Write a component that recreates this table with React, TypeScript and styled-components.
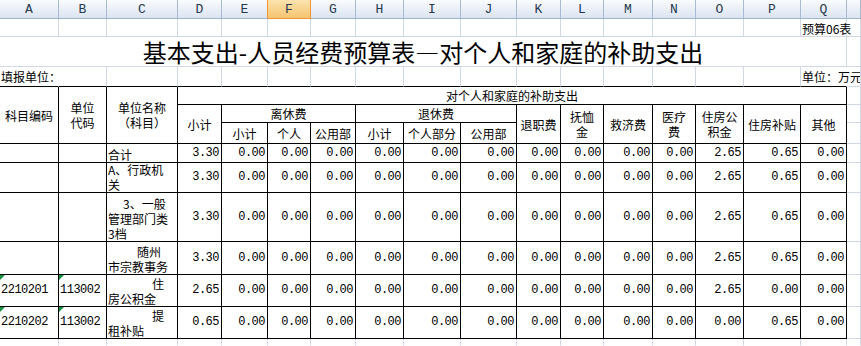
import React from 'react';
import styled, { createGlobalStyle, css } from 'styled-components';

const GRID = '#d0d7e5';
const INK = '#000';

const GlobalStyle = createGlobalStyle`
  html, body { margin: 0; padding: 0; background: #fff; }
  body { width: 861px; height: 346px; overflow: hidden; }
`;

// column widths A..Q, border included (R is whatever is left)
const cols = [59, 48, 71, 44, 46, 43, 45, 48, 57, 56, 44, 43, 49, 43, 48, 57, 46];
const letters = 'ABCDEFGHIJKLMNOPQ'.split('');
const ACTIVE = 'F';

const Sheet = styled.div`
  display: grid;
  grid-template-columns: ${cols.map(c => c + 'px').join(' ')} 1fr;
  grid-template-rows: 19px 18px 30px 20px 18px 18px 21px 19px 30px 49px 33px 32px 32px 1fr;
  width: 861px;
  height: 346px;
  overflow: hidden;
  font-family: "Noto Sans CJK SC", "Liberation Sans", sans-serif;
  font-size: 12px;
  color: #000;
`;

const ColHead = styled.div<{ $active?: boolean; $nextActive?: boolean }>`
  box-sizing: border-box;
  display: flex;
  align-items: center;
  justify-content: center;
  font-family: "Liberation Mono", monospace;
  font-size: 13px;
  color: #26394f;
  background: linear-gradient(#f9fbfd, #dbe4f0);
  border-right: 1px solid ${p => (p.$active || p.$nextActive ? '#f29536' : '#a7bad2')};
  border-bottom: 1px solid ${p => (p.$active ? '#f29536' : '#9eb6ce')};
  ${p => p.$active && css`
    background: linear-gradient(#fbe3ae, #f5c470);
  `}
`;

type Line = 'grid' | 'ink' | 'none';
const lineColor = (l: Line) => (l === 'ink' ? INK : l === 'grid' ? GRID : 'transparent');

const Cell = styled.div<{
  $span?: number;
  $rows?: number;
  $right?: Line;
  $bottom?: Line;
  $align?: 'left' | 'center' | 'right';
  $valign?: 'center' | 'end';
  $flag?: boolean;
}>`
  position: relative;
  box-sizing: border-box;
  min-width: 0;
  grid-column: span ${p => p.$span ?? 1};
  grid-row: span ${p => p.$rows ?? 1};
  border-right: 1px solid ${p => lineColor(p.$right ?? 'grid')};
  border-bottom: 1px solid ${p => lineColor(p.$bottom ?? 'grid')};
  display: flex;
  flex-direction: column;
  justify-content: ${p => (p.$valign === 'end' ? 'flex-end' : 'center')};
  align-items: ${p => (p.$align === 'left' ? 'flex-start' : p.$align === 'right' ? 'flex-end' : 'center')};
  text-align: ${p => p.$align ?? 'center'};
  padding: 0 2px 0 ${p => (p.$align === 'left' ? 1 : 2)}px;
  line-height: 15px;
  white-space: nowrap;
  ${p => p.$flag && css`
    &::before {
      content: '';
      position: absolute;
      top: 0;
      left: 0;
      border-top: 5px solid #17913b;
      border-right: 5px solid transparent;
    }
  `}
`;

const Label = styled.span<{ $indent?: number }>`
  display: block;
  text-indent: ${p => p.$indent ?? 0}px;
`;

const Num = styled.span`
  font-family: "Liberation Mono", monospace;
  font-size: 12px;
  letter-spacing: -0.5px;
`;

const Title = styled.span`
  font-size: 24px;
  line-height: 28px;
`;

// the long dash of the title is a full-width glyph in the sheet font
const WideDash = styled.span`
  display: inline-block;
  width: 24px;
  font-feature-settings: "fwid";
  text-align: center;
`;

const lines = (text: string[]) =>
  text.map((t, i) => (
    <React.Fragment key={i}>
      {i > 0 && <br />}
      {t}
    </React.Fragment>
  ));

type Row = { code?: string; unit?: string; name: string[]; indent?: number; values: number[] };

const zeros = (n: number) => Array(n).fill(0) as number[];
const unitRow = [3.3, ...zeros(10), 2.65, 0.65, 0];

const rows: Row[] = [
  { name: ['合计'], values: unitRow },
  { name: ['A、行政机', '关'], values: unitRow },
  { name: ['3、一般', '管理部门类', '3档'], indent: 15, values: unitRow },
  { name: ['随州', '市宗教事务'], indent: 29, values: unitRow },
  { code: '2210201', unit: '113002', name: ['住', '房公积金'], indent: 44, values: [2.65, ...zeros(10), 2.65, 0, 0] },
  { code: '2210202', unit: '113002', name: ['提', '租补贴'], indent: 44, values: [0.65, ...zeros(10), 0, 0.65, 0] },
];

const Head = ({ text, rows: r, span }: { text: string[]; rows?: number; span?: number }) => (
  <Cell $rows={r} $span={span} $right="ink" $bottom="ink">
    <Label>{lines(text)}</Label>
  </Cell>
);

export default function App() {
  return (
    <>
      <GlobalStyle />
      <Sheet>
        {letters.map((l, i) => (
          <ColHead key={l} $active={l === ACTIVE} $nextActive={letters[i + 1] === ACTIVE}>{l}</ColHead>
        ))}
        <ColHead />

        {/* row 1 */}
        {letters.slice(0, 16).map(l => <Cell key={'r1' + l} />)}
        <Cell $align="left" $valign="end"><Label>预算06表</Label></Cell>
        <Cell />

        {/* row 2 */}
        <Cell $span={17} $valign="end">
          <Title>基本支出-人员经费预算表<WideDash>—</WideDash>对个人和家庭的补助支出</Title>
        </Cell>
        <Cell />

        {/* row 3 */}
        <Cell $align="left" $right="none" $bottom="ink"><Label>填报单位：</Label></Cell>
        {letters.slice(1, 16).map(l => <Cell key={'r3' + l} $bottom="ink" />)}
        <Cell $align="left" $right="none" $bottom="ink"><Label>单位：万元</Label></Cell>
        <Cell />

        {/* table header */}
        <Head text={['科目编码']} rows={3} />
        <Head text={['单位', '代码']} rows={3} />
        <Head text={['单位名称', '（科目）']} rows={3} />
        <Head text={['对个人和家庭的补助支出']} span={14} />
        <Cell />

        <Head text={['小计']} rows={2} />
        <Head text={['离休费']} span={3} />
        <Head text={['退休费']} span={3} />
        <Head text={['退职费']} rows={2} />
        <Head text={['抚恤', '金']} rows={2} />
        <Head text={['救济费']} rows={2} />
        <Head text={['医疗', '费']} rows={2} />
        <Head text={['住房公', '积金']} rows={2} />
        <Head text={['住房补贴']} rows={2} />
        <Head text={['其他']} rows={2} />
        <Cell />

        {['小计', '个人', '公用部', '小计', '个人部分', '公用部'].map((t, i) => (
          <Head key={'sub' + i} text={[t]} />
        ))}
        <Cell />

        {/* data */}
        {rows.map((r, i) => (
          <React.Fragment key={'row' + i}>
            <Cell $align="left" $right="ink" $bottom="ink" $flag={!!r.code}>
              {r.code && <Num>{r.code}</Num>}
            </Cell>
            <Cell $align="left" $right="ink" $bottom="ink" $flag={!!r.unit}>
              {r.unit && <Num>{r.unit}</Num>}
            </Cell>
            <Cell $align="left" $valign="end" $right="ink" $bottom="ink">
              <Label $indent={r.indent}>{lines(r.name)}</Label>
            </Cell>
            {r.values.map((v, j) => (
              <Cell key={j} $align="right" $right="ink" $bottom="ink">
                <Num>{v.toFixed(2)}</Num>
              </Cell>
            ))}
            <Cell />
          </React.Fragment>
        ))}

        {/* trailing empty row */}
        {letters.map(l => <Cell key={'r13' + l} $bottom="none" />)}
        <Cell $bottom="none" />
      </Sheet>
    </>
  );
}
